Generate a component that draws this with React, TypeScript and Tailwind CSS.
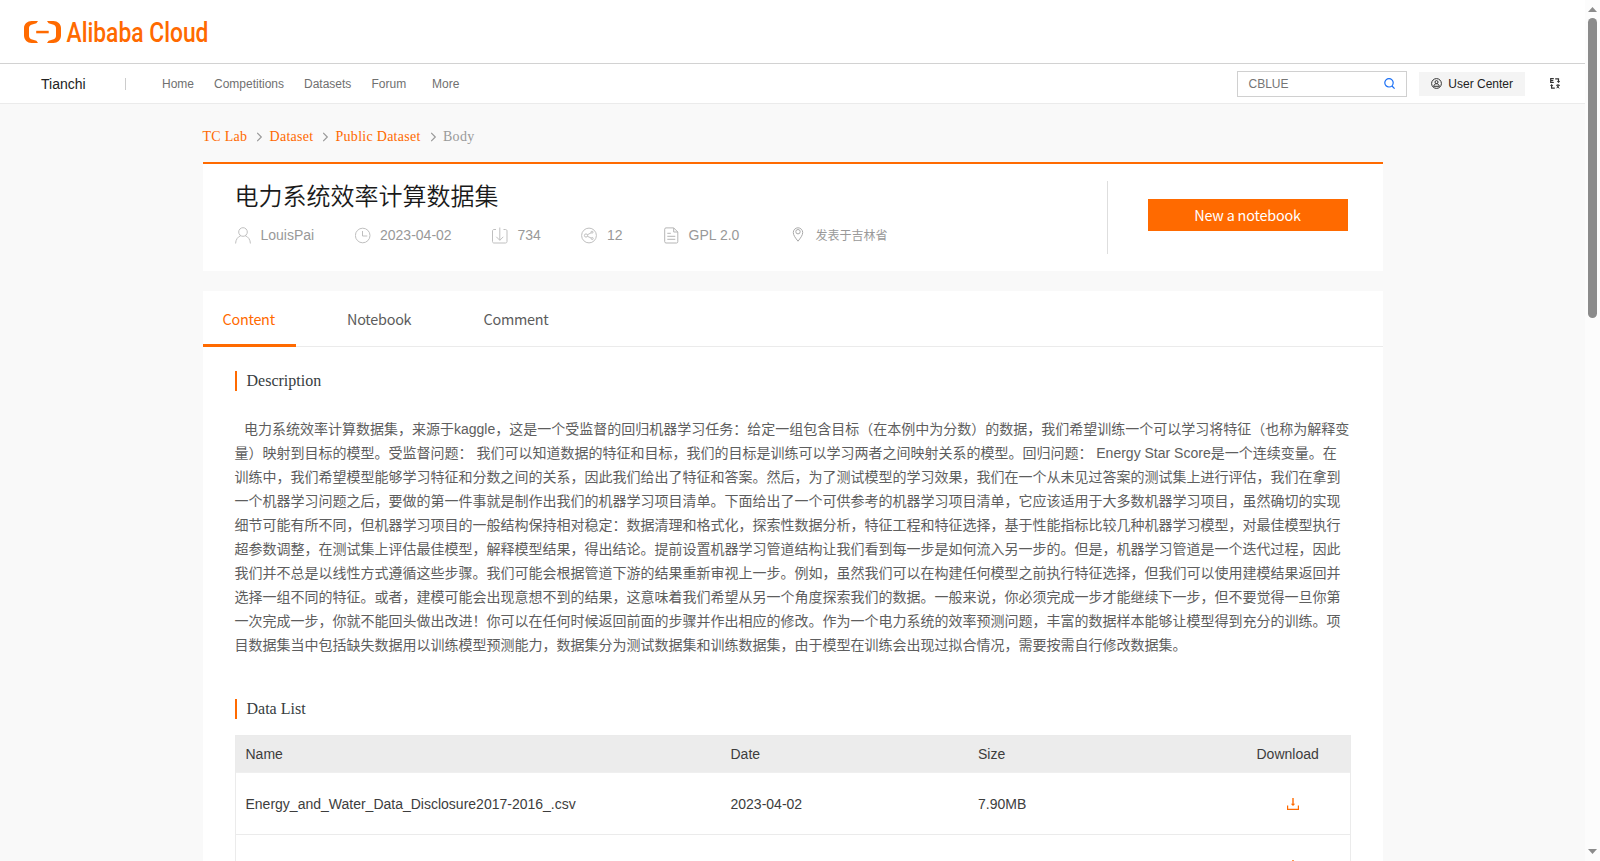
import { ReactNode } from "react";

const navItems = [
    { label: "Home", width: "w-[52px]" },
    { label: "Competitions", width: "w-[90px]" },
    { label: "Datasets", width: "w-[67.5px]" },
    { label: "Forum", width: "w-[60.5px]" },
    { label: "More", width: "w-[40px]" },
];

const description = [
    "电力系统效率计算数据集，来源于kaggle，这是一个受监督的回归机器学习任务：给定一组包含目标（在本例中为分数）的数据，我们希望训练一个可以学习将特征（也称为解释变",
    "量）映射到目标的模型。受监督问题： 我们可以知道数据的特征和目标，我们的目标是训练可以学习两者之间映射关系的模型。回归问题： Energy Star Score是一个连续变量。在",
    "训练中，我们希望模型能够学习特征和分数之间的关系，因此我们给出了特征和答案。然后，为了测试模型的学习效果，我们在一个从未见过答案的测试集上进行评估，我们在拿到",
    "一个机器学习问题之后，要做的第一件事就是制作出我们的机器学习项目清单。下面给出了一个可供参考的机器学习项目清单，它应该适用于大多数机器学习项目，虽然确切的实现",
    "细节可能有所不同，但机器学习项目的一般结构保持相对稳定：数据清理和格式化，探索性数据分析，特征工程和特征选择，基于性能指标比较几种机器学习模型，对最佳模型执行",
    "超参数调整，在测试集上评估最佳模型，解释模型结果，得出结论。提前设置机器学习管道结构让我们看到每一步是如何流入另一步的。但是，机器学习管道是一个迭代过程，因此",
    "我们并不总是以线性方式遵循这些步骤。我们可能会根据管道下游的结果重新审视上一步。例如，虽然我们可以在构建任何模型之前执行特征选择，但我们可以使用建模结果返回并",
    "选择一组不同的特征。或者，建模可能会出现意想不到的结果，这意味着我们希望从另一个角度探索我们的数据。一般来说，你必须完成一步才能继续下一步，但不要觉得一旦你第",
    "一次完成一步，你就不能回头做出改进！你可以在任何时候返回前面的步骤并作出相应的修改。作为一个电力系统的效率预测问题，丰富的数据样本能够让模型得到充分的训练。项",
    "目数据集当中包括缺失数据用以训练模型预测能力，数据集分为测试数据集和训练数据集，由于模型在训练会出现过拟合情况，需要按需自行修改数据集。",
];

const files = [
    { name: "Energy_and_Water_Data_Disclosure2017-2016_.csv", date: "2023-04-02", size: "7.90MB" },
    { name: "", date: "", size: "" },
];

const Logo = () => {
    return (
        <svg className="block overflow-visible" width="240" height="46" viewBox="0 -7 240 46">
            <g fill="#ff6a00">
                <path d="M14 4H7.500C3.500 4 0 7 0 11v7.500C0 23 3.500 26 7.500 26H14l-1.600-2.300-5-1.500C6 21.800 5 20.500 5 19v-8c0-1.500 1-2.800 2.400-3.200l5-1.500z" />
                <path d="M23 4h6.500C33.500 4 37 7 37 11v7.500c0 4.500-3.500 7.500-7.500 7.500H23l1.600-2.300 5-1.500C31 21.800 32 20.500 32 19v-8c0-1.500-1-2.800-2.400-3.200l-5-1.500z" />
                <path d="M12.200 13.800h12.500v2.500H12.200z" />
                <text x="42.500" y="25" fontFamily="Roboto, sans-serif" fontWeight="500" fontSize="27.500" textLength="142" lengthAdjust="spacingAndGlyphs">Alibaba Cloud</text>
            </g>
        </svg>
    );
}

const MetaIcon = ({ children }: { children: ReactNode }) => {
    return (
        <svg className="block shrink-0" width="16" height="17" viewBox="0 0 16 17" fill="none" stroke="#bfbfbf" strokeWidth="1">
            {children}
        </svg>
    );
}

const DownloadIcon = () => {
    return (
        <svg className="block" width="12" height="12" viewBox="0 0 12 12" fill="none" stroke="#ff6a00">
            <path d="M.600 7.500v3.800h10.800V7.500" strokeWidth="1.200" />
            <path d="M6 0v7" strokeWidth="1.400" />
            <path d="M3.800 5.800h4.400L6 8z" fill="#ff6a00" stroke="none" />
        </svg>
    );
}

const Separator = () => {
    return (
        <svg className="block" width="6" height="10" viewBox="0 0 6 10" fill="none" stroke="#999" strokeWidth="1.200">
            <path d="M.200 .800 4.300 5 .200 9.200" />
        </svg>
    );
}

const SectionTitle = ({ children }: { children: ReactNode }) => {
    return (
        <h2 className="h-5 border-l-2 border-[#ff6a00] pl-[10px] text-base leading-5 text-[#373d41] font-['Liberation_Serif',serif]">{children}</h2>
    );
}

const Header = () => {
    return (
        <header className="bg-white">
            <div className="h-16 border-b border-[#d2d2d2] pl-6 pt-[10px]">
                <Logo />
            </div>
            <nav className="flex h-10 items-center border-b border-[#ebebeb] text-xs text-[#707070]">
                <div className="w-[84px] ml-[41px] text-sm text-[#222]">Tianchi</div>
                <div className="h-3 w-px bg-[#ccc] mr-9"></div>
                {navItems.map((item) => (
                    <div key={item.label} className={item.width}>{item.label}</div>
                ))}
                <div className="ml-auto flex h-[26px] w-[170px] items-center justify-between border border-[#d0d0d0] pl-[10.5px] pr-[11px] text-[#757575]">
                    <span>CBLUE</span>
                    <svg width="11" height="11" viewBox="0 0 11 11" fill="none" stroke="#1a6ff5" strokeWidth="1.200">
                        <circle cx="5" cy="4.800" r="4.200" />
                        <path d="m8 8 2.600 2.600" />
                    </svg>
                </div>
                <div className="ml-3 flex h-6 w-[106px] items-center gap-[6px] bg-[#f4f4f4] pl-[12.3px] text-[#222]">
                    <svg width="11" height="11" viewBox="0 0 11 11" fill="none" stroke="#333" strokeWidth="1">
                        <circle cx="5.500" cy="5.500" r="4.900" />
                        <circle cx="5.500" cy="4.100" r="1.500" />
                        <path d="M2.700 8.300c.3-1.700 1.300-2.600 2.800-2.600s2.500.900 2.800 2.600z" />
                    </svg>
                    <span>User Center</span>
                </div>
                {/* language switch */}
                <svg className="ml-[25px] mr-[25px]" width="10" height="11" viewBox="0 0 10 11" fill="none" stroke="#333" strokeWidth="1.200">
                    <path d="M3.800 .700H.700v3.800h3.100M.700 2.600h2.600M5.200 .800h3.300v3.400" />
                    <path d="M6.800 3h3.400L8.500 5zM-.100 8h3.400L1.600 6z" fill="#333" stroke="none" />
                    <path d="M1.600 7v3.200h3.200" />
                    <path d="M6.200 7.300h3.600M8 6v1.300M6.600 10.200l2.600-2.800M6.900 8.200l2.400 2.100" strokeWidth="1" />
                </svg>
            </nav>
        </header>
    );
}

const Breadcrumb = () => {
    return (
        <div className="flex h-[58px] items-center pt-[7px] text-sm leading-4 text-[#ff6a00] tracking-[0.28px] font-['Liberation_Serif',serif]">
            <span className="w-[54px]">TC Lab</span>
            <Separator />
            <span className="ml-[7px] w-[53px]">Dataset</span>
            <Separator />
            <span className="ml-[7px] w-[95px]">Public Dataset</span>
            <Separator />
            <span className="ml-[6.5px] text-[#999]">Body</span>
        </div>
    );
}

const Summary = () => {
    return (
        <section className="flex h-[109px] border-t-2 border-[#ff6a00] bg-white">
            <div className="w-[904px] pl-8 pt-[15px]">
                <h1 className="h-8 text-2xl leading-8 text-[#1a1a1a] font-['Noto_Sans_CJK_SC',sans-serif] font-[350]">电力系统效率计算数据集</h1>
                <div className="mt-4 flex h-[17px] text-sm leading-4 text-[#999]">
                    <MetaIcon>
                        <circle cx="8" cy="5" r="4.300" />
                        <path d="M.600 16.500c0-4 2.500-7 5.200-7.800M15.400 16.500c0-4-2.500-7-5.200-7.800" />
                    </MetaIcon>
                    <span className="ml-[10px] w-[94px]">LouisPai</span>
                    <MetaIcon>
                        <circle cx="7.700" cy="8.500" r="7.300" />
                        <path d="M7.500 4v5h4.800" />
                    </MetaIcon>
                    <span className="ml-[9.5px] w-[111.5px]">2023-04-02</span>
                    <MetaIcon>
                        <path d="M4 2.500H2c-.900 0-1.500.600-1.500 1.500v10.500c0 .900.600 1.500 1.500 1.500h11.500c.900 0 1.500-.600 1.500-1.500V4c0-.900-.600-1.500-1.500-1.500h-2M7.800.500v12.700M4.300 9.800l3.500 3.500 3.500-3.500" />
                    </MetaIcon>
                    <span className="ml-[10px] w-[63px]">734</span>
                    <MetaIcon>
                        <circle cx="8" cy="8.500" r="7.400" />
                        <circle cx="5" cy="8.500" r="1.600" />
                        <circle cx="11" cy="5.200" r="1" />
                        <circle cx="11.200" cy="11.500" r="1" />
                        <path d="m6.400 7.800 3.700-2M6.400 9.300l3.900 1.800" />
                    </MetaIcon>
                    <span className="ml-[10.5px] w-[56.500px]">12</span>
                    <MetaIcon>
                        <path d="M9.700.900H2c-.900 0-1.300.500-1.300 1.300v12.500c0 .800.500 1.300 1.300 1.300h10.500c.900 0 1.300-.500 1.300-1.300V5zM9.700.900V5h4.100M3.300 6.300h3.500M3.300 9.300h8M3.300 12.300h8" stroke="#b5b5b5" />
                    </MetaIcon>
                    <span className="ml-[9px] w-[103px]">GPL 2.0</span>
                    <MetaIcon>
                        <g stroke="#aaa">
                            <path d="M6 14.200C3.500 11 1.300 8.300 1.300 5.500a4.700 4.700 0 0 1 9.400 0c0 2.800-2.200 5.500-4.700 8.700z" />
                            <circle cx="6" cy="4.700" r="2.200" />
                        </g>
                    </MetaIcon>
                    <span className="ml-2 text-xs leading-[18px]">发表于吉林省</span>
                </div>
            </div>
            <div className="mt-[17px] h-[73px] w-px bg-[#dedede]"></div>
            <button className="ml-10 mt-[35px] h-8 w-[200px] bg-[#ff6a00] text-[14.4px] leading-8 tracking-[-0.2px] text-white font-['Noto_Sans_CJK_SC',sans-serif]">New a notebook</button>
        </section>
    );
}

const Tabs = () => {
    return (
        <div className="flex h-14 border-b border-[#ebebeb] text-[14.4px] leading-[56px] tracking-[-0.25px] text-[#5c5c5c] font-['Noto_Sans_CJK_SC',sans-serif]">
            <div className="h-14 w-[93px] border-b-3 border-[#ff6a00] pl-5 text-[#ff6a00]">Content</div>
            <div className="ml-[51.5px] w-[136.5px]">Notebook</div>
            <div>Comment</div>
        </div>
    );
}

const DataTable = () => {
    return (
        <div className="mt-4 border border-[#ebebeb] text-sm text-[#3d3d3d]">
            <div className="grid h-[37px] grid-cols-[485px_248px_267px_114px] items-center border-b border-[#efefef] bg-[#ececec]">
                <div className="pl-[10px]">Name</div>
                <div className="pl-[10px]">Date</div>
                <div className="pl-[9.5px]">Size</div>
                <div className="pl-[21px]">Download</div>
            </div>
            {files.map((file, index) => (
                <div key={index} className="grid h-[62px] grid-cols-[485px_248px_267px_114px] items-center border-b border-[#ebebeb]">
                    <div className="pl-[10px]">{file.name}</div>
                    <div className="pl-[10px]">{file.date}</div>
                    <div className="pl-[9.5px]">{file.size}</div>
                    <div className="flex justify-center pl-px"><DownloadIcon /></div>
                </div>
            ))}
        </div>
    );
}

const Scrollbar = () => {
    return (
        <div className="flex h-full w-[15px] flex-col items-center justify-between bg-[#fcfcfc] py-[7px]">
            <div className="flex flex-col items-center gap-[6px]">
                <svg className="block" width="9" height="5" viewBox="0 0 9 5"><path d="M0 5 4.500 0 9 5z" fill="#8b8b8b" /></svg>
                <div className="h-[300px] w-[9px] rounded-full bg-[#8b8b8b]"></div>
            </div>
            <svg className="block" width="9" height="5" viewBox="0 0 9 5"><path d="M0 0 4.500 5 9 0z" fill="#8b8b8b" /></svg>
        </div>
    );
}

const App = () => {
    return (
        <div className="flex h-[861px] overflow-hidden bg-[#f9f9f9] font-['Liberation_Sans','Noto_Sans_CJK_SC',sans-serif]">
            <div className="w-[1585px]">
                <Header />
                <main className="ml-[202.5px] w-[1180px]">
                    <Breadcrumb />
                    <Summary />
                    <section className="mt-5 bg-white">
                        <Tabs />
                        <div className="px-8 pt-6">
                            <SectionTitle>Description</SectionTitle>
                            <div className="mt-[26px] text-sm leading-6 text-[#5e5e5e]">
                                {description.map((line, index) => (
                                    <p key={index} className="whitespace-nowrap first:pl-[9.5px]">{line}</p>
                                ))}
                            </div>
                            <div className="mt-[42px]">
                                <SectionTitle>Data List</SectionTitle>
                            </div>
                            <DataTable />
                        </div>
                    </section>
                </main>
            </div>
            <Scrollbar />
        </div>
    );
}

export default App;
